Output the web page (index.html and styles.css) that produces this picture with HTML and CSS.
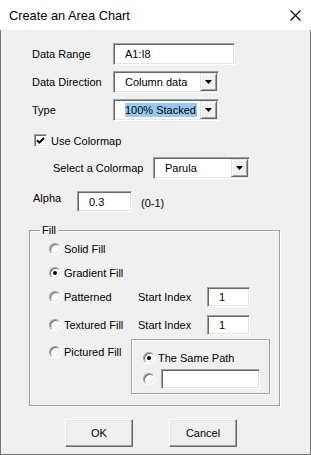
FILE: index.html
```html
<!DOCTYPE html>
<html lang="en">
<head>
  <meta charset="UTF-8" />
  <meta name="viewport" content="width=device-width, initial-scale=1.0"/>
  <title>Create an Area Chart</title>
  <link rel="stylesheet" href="styles.css">
</head>
<body>

  <div class="window">
    <div class="titlebar">
      <span class="title">Create an Area Chart</span>
      <svg class="close" width="11" height="11" viewBox="0 0 11 11">
        <path d="M0.5 0.5L10.5 10.5M10.5 0.5L0.5 10.5" stroke="#000" stroke-width="1.1" fill="none"/>
      </svg>
    </div>

    <div class="content">
      <div class="row">
        <span class="label">Data Range</span>
        <div class="edit range">A1:I8</div>
      </div>

      <div class="row gap6">
        <span class="label">Data Direction</span>
        <div class="combo direction">
          <span>Column data</span>
          <span class="drop"><svg width="7" height="4" viewBox="0 0 7 4"><path d="M0 0h7L3.5 4z" fill="#000"/></svg></span>
        </div>
      </div>

      <div class="row gap6">
        <span class="label">Type</span>
        <div class="combo direction">
          <span class="sel">100% Stacked</span>
          <span class="drop"><svg width="7" height="4" viewBox="0 0 7 4"><path d="M0 0h7L3.5 4z" fill="#000"/></svg></span>
        </div>
      </div>

      <div class="check-row">
        <span class="checkbox">
          <svg width="9" height="9" viewBox="0 0 9 9"><path d="M1 4.2L3.4 6.6L8 2" stroke="#000" stroke-width="2" fill="none"/></svg>
        </span>
        <span>Use Colormap</span>
      </div>

      <div class="row colormap-row">
        <span class="label colormap-label">Select a Colormap</span>
        <div class="combo colormap">
          <span>Parula</span>
          <span class="drop"><svg width="7" height="4" viewBox="0 0 7 4"><path d="M0 0h7L3.5 4z" fill="#000"/></svg></span>
        </div>
      </div>

      <div class="alpha-row">
        <span class="alpha-label">Alpha</span>
        <div class="edit alpha">0.3</div>
        <span class="hint">(0-1)</span>
      </div>

      <div class="group fill">
        <span class="group-title">Fill</span>

        <div class="opt">
          <span class="radio"></span><span>Solid Fill</span>
        </div>
        <div class="opt gap8">
          <span class="radio on"></span><span>Gradient Fill</span>
        </div>
        <div class="opt-row gap6">
          <div class="opt wide"><span class="radio"></span><span>Patterned</span></div>
          <span class="index-label">Start Index</span>
          <div class="edit index">1</div>
        </div>
        <div class="opt-row gap8">
          <div class="opt wide"><span class="radio"></span><span>Textured Fill</span></div>
          <span class="index-label">Start Index</span>
          <div class="edit index">1</div>
        </div>
        <div class="picture-row">
          <div class="opt pic"><span class="radio"></span><span>Pictured Fill</span></div>
          <div class="group path">
            <div class="opt">
              <span class="radio on"></span><span>The Same Path</span>
            </div>
            <div class="opt path-edit">
              <span class="radio"></span>
              <div class="edit path-box"></div>
            </div>
          </div>
        </div>
      </div>

      <div class="buttons">
        <button class="btn">OK</button>
        <button class="btn">Cancel</button>
      </div>
    </div>
  </div>

</body>
</html>
```

FILE: styles.css
```css
* {
  box-sizing: border-box;
  margin: 0;
  padding: 0;
}

body {
  background: #f0f0f0;
  font-family: 'Liberation Sans', Arial, sans-serif;
  font-size: 11px;
  color: #000;
}

.window {
  width: 311px;
  height: 455px;
  background: #f0f0f0;
  border: 1px solid #767676;
  border-top: none;
}

.titlebar {
  height: 30px;
  margin: 0 -1px;
  background: #fff;
  display: flex;
  align-items: center;
  justify-content: space-between;
  padding: 0 10px 0 9px;
}

.title {
  font-size: 12.8px;
}

.content {
  padding: 13px 0 0 31px;
}

/* label + control rows */
.row {
  display: flex;
  align-items: center;
  height: 22px;
}

.gap6 { margin-top: 6px; }
.gap8 { margin-top: 8px; }

.label {
  width: 81px;
}

/* sunken edit / combo boxes */
.edit,
.combo {
  background: #fff;
  border: 1px solid;
  border-color: #a0a0a0 #fff #fff #a0a0a0;
  box-shadow: inset 1px 1px #696969, inset -1px -1px #e3e3e3;
}

.edit {
  padding-left: 11px;
  display: flex;
  align-items: center;
}

.range {
  width: 122px;
  height: 22px;
}

.combo {
  height: 22px;
  display: flex;
  align-items: center;
  justify-content: space-between;
  padding: 1px 1px 1px 11px;
}

.direction { width: 106px; }

.drop {
  width: 17px;
  height: 18px;
  background: #f0f0f0;
  border: 1px solid;
  border-color: #e3e3e3 #696969 #696969 #e3e3e3;
  box-shadow: inset 1px 1px #fff, inset -1px -1px #a0a0a0;
  display: flex;
  align-items: center;
  justify-content: center;
}

.sel {
  background: #99c9ef;
  line-height: 14px;
  padding-right: 1px;
}

/* checkbox */
.check-row {
  display: flex;
  align-items: center;
  height: 13px;
  margin: 13px 0 0 2px;
  gap: 4px;
}

.checkbox {
  width: 13px;
  height: 13px;
  background: #fff;
  border: 1px solid;
  border-color: #a0a0a0 #fff #fff #a0a0a0;
  box-shadow: inset 1px 1px #696969, inset -1px -1px #e3e3e3;
  display: flex;
  align-items: center;
  justify-content: center;
}

.colormap-row {
  margin-top: 10px;
  padding-left: 21px;
}

.colormap-label { width: 100px; }
.colormap { width: 97px; }

.alpha-row {
  display: flex;
  height: 21px;
  margin: 12px 0 0 1px;
}

.alpha-label {
  width: 44px;
  line-height: 14px;
}

.alpha {
  width: 55px;
  height: 21px;
}

.hint {
  margin-left: 9px;
  align-self: center;
  padding-top: 2px;
}

/* etched group boxes */
.group {
  border: 1px solid #a0a0a0;
  box-shadow: inset 1px 1px #fff, 1px 1px #fff;
}

.fill {
  position: relative;
  width: 251px;
  height: 176px;
  margin: 18px 0 0 -3px;
  padding: 10px 0 0 19px;
}

.group-title {
  position: absolute;
  top: -7px;
  left: 10px;
  padding: 0 2px;
  line-height: 13px;
  background: #f0f0f0;
}

.opt {
  display: flex;
  align-items: center;
  height: 16px;
  gap: 3px;
}

.radio {
  width: 12px;
  height: 12px;
  flex: none;
  border-radius: 50%;
  background: #fff;
  border: 1px solid;
  border-color: #a0a0a0 #fff #fff #a0a0a0;
  box-shadow: inset 1px 1px #696969, inset -1px -1px #e3e3e3;
  display: flex;
  align-items: center;
  justify-content: center;
}

.radio.on::after {
  content: "";
  width: 4px;
  height: 4px;
  border-radius: 50%;
  background: #000;
}

.opt-row {
  display: flex;
  align-items: center;
  height: 20px;
}

.opt.wide { width: 89px; }

.index-label { width: 69px; }

.index {
  width: 43px;
  height: 20px;
}

.picture-row {
  display: flex;
  align-items: flex-start;
  margin-top: 4px;
}

.opt.pic {
  width: 82px;
  margin-top: 5px;
}

.path {
  width: 139px;
  height: 55px;
  padding: 10px 0 0 11px;
}

.path-edit {
  height: 20px;
  margin-top: 3px;
  gap: 6px;
}

.path-box {
  width: 99px;
  height: 20px;
}

/* dialog buttons */
.buttons {
  display: flex;
  gap: 36px;
  margin: 13px 0 0 33px;
}

.btn {
  width: 68px;
  height: 28px;
  font-family: inherit;
  font-size: 11px;
  color: #000;
  background: #f0f0f0;
  border: 1px solid;
  border-color: #fff #696969 #696969 #fff;
  box-shadow: inset -1px -1px #a0a0a0, inset 1px 1px #e3e3e3;
}
```
